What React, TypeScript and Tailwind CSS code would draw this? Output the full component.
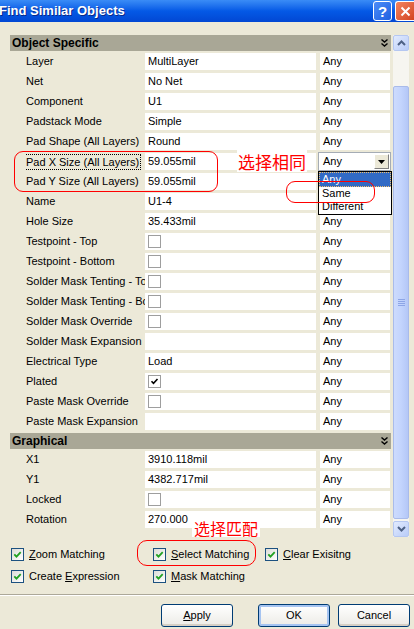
import React from 'react';

type Row = {
  label: string;
  value?: string;
  check?: boolean;
  focus?: boolean;
  covered?: boolean;
};

const objectRows: Row[] = [
  { label: 'Layer', value: 'MultiLayer' },
  { label: 'Net', value: 'No Net' },
  { label: 'Component', value: 'U1' },
  { label: 'Padstack Mode', value: 'Simple' },
  { label: 'Pad Shape (All Layers)', value: 'Round' },
  { label: 'Pad X Size (All Layers)', value: '59.055mil', focus: true, covered: true },
  { label: 'Pad Y Size (All Layers)', value: '59.055mil', covered: true },
  { label: 'Name', value: 'U1-4', covered: true },
  { label: 'Hole Size', value: '35.433mil' },
  { label: 'Testpoint - Top', check: false },
  { label: 'Testpoint - Bottom', check: false },
  { label: 'Solder Mask Tenting - Top', check: false },
  { label: 'Solder Mask Tenting - Bottom', check: false },
  { label: 'Solder Mask Override', check: false },
  { label: 'Solder Mask Expansion', value: '' },
  { label: 'Electrical Type', value: 'Load' },
  { label: 'Plated', check: true },
  { label: 'Paste Mask Override', check: false },
  { label: 'Paste Mask Expansion', value: '' },
];

const graphicalRows: Row[] = [
  { label: 'X1', value: '3910.118mil' },
  { label: 'Y1', value: '4382.717mil' },
  { label: 'Locked', check: false },
  { label: 'Rotation', value: '270.000' },
];

const DoubleChevron = () => (
  <svg width="7" height="8" viewBox="0 0 7 8" className="shrink-0">
    <path d="M0.5 0.5 L3.5 3 L6.5 0.5" fill="none" stroke="#000" strokeWidth="1.4" />
    <path d="M0.5 4.5 L3.5 7 L6.5 4.5" fill="none" stroke="#000" strokeWidth="1.4" />
  </svg>
);

const SectionHeader = ({ title }: { title: string }) => (
  <div className="flex h-[16px] items-center justify-between bg-[#A9A796] pl-[2px] pr-[3px]">
    <span className="text-[12px] font-bold leading-none text-black">{title}</span>
    <DoubleChevron />
  </div>
);

const GridCheck = ({ checked }: { checked: boolean }) => (
  <span className="flex h-[13px] w-[13px] items-center justify-center border border-[#9E9E9E] bg-white">
    {checked && (
      <svg width="9" height="9" viewBox="0 0 9 9">
        <path d="M1.5 4.2 L3.5 6.3 L7.5 2" fill="none" stroke="#000" strokeWidth="1.6" />
      </svg>
    )}
  </span>
);

const PropRow = ({ row }: { row: Row }) => (
  <div className="flex h-[20px] pl-[16px] pt-[2px]">
    <div className="flex h-[17px] w-[119px] items-center overflow-hidden whitespace-nowrap">
      <span
        className={
          row.focus
            ? '-ml-[2px] border border-dotted border-black px-[1px] leading-[14px]'
            : 'leading-[17px]'
        }
      >
        {row.label}
      </span>
    </div>
    <div className="flex h-[17px] w-[171px] items-center bg-white pl-[3px]">
      {row.check !== undefined ? <GridCheck checked={row.check} /> : row.value}
    </div>
    <div className="ml-[4px] flex h-[17px] w-[70px] items-center bg-white pl-[3px]">
      {row.covered ? '' : 'Any'}
    </div>
  </div>
);

const XpCheck = () => (
  <span className="flex h-[13px] w-[13px] shrink-0 items-center justify-center border border-[#1C5180] bg-gradient-to-br from-[#DCDCD7] to-white">
    <svg width="9" height="9" viewBox="0 0 9 9">
      <path d="M1.3 4.3 L3.5 6.6 L7.7 2.2" fill="none" stroke="#21A121" strokeWidth="1.8" />
    </svg>
  </span>
);

const Option = ({ children }: { children: React.ReactNode }) => (
  <label className="flex h-[13px] items-center gap-[5px] leading-[13px]">
    <XpCheck />
    <span className="whitespace-nowrap">{children}</span>
  </label>
);

const ScrollArrow = ({ up }: { up: boolean }) => (
  <div className="flex h-[16px] w-[16px] items-center justify-center rounded-[2px] border border-[#B5C7F1] bg-gradient-to-br from-[#E2EBFE] to-[#B9CCF8]">
    <svg width="9" height="6" viewBox="0 0 9 6">
      <path
        d={up ? 'M1 5 L4.5 1.5 L8 5' : 'M1 1 L4.5 4.5 L8 1'}
        fill="none"
        stroke="#4D6185"
        strokeWidth="2"
      />
    </svg>
  </div>
);

const Scrollbar = () => (
  <div className="flex h-[502px] w-[16px] flex-col bg-[#F6F5F0]">
    <ScrollArrow up />
    <div className="flex flex-1 flex-col pt-[35px] pb-[2px]">
      <div className="flex flex-1 items-center justify-center rounded-[2px] border border-[#A9BBEA] bg-gradient-to-r from-[#CDDBFD] via-[#C3D4FD] to-[#B4C7F7]">
        <div className="flex flex-col gap-[1px]">
          <span className="h-[1px] w-[7px] bg-[#8DA5E6]" />
          <span className="h-[1px] w-[7px] bg-[#8DA5E6]" />
          <span className="h-[1px] w-[7px] bg-[#8DA5E6]" />
          <span className="h-[1px] w-[7px] bg-[#8DA5E6]" />
        </div>
      </div>
    </div>
    <ScrollArrow up={false} />
  </div>
);

const Button = ({ children, focus }: { children: React.ReactNode; focus?: boolean }) => (
  <button
    className={
      'flex h-[23px] w-[72px] items-center justify-center rounded-[3px] border border-[#003C74] bg-gradient-to-b from-white to-[#ECEBE6] text-[11px] text-black ' +
      (focus ? 'shadow-[inset_0_0_0_2px_#A6C4F1]' : 'shadow-[inset_0_-2px_0_#D6D0C5]')
    }
  >
    {children}
  </button>
);

export default function App() {
  return (
    <div
      className="relative h-[629px] w-[414px] overflow-hidden bg-[#ECE9D8] text-[11px] text-black"
      style={{ fontFamily: '"Liberation Sans", Arial, sans-serif' }}
    >
      {/* Title bar */}
      <div className="flex h-[22px] items-center justify-between bg-gradient-to-b from-[#3A8CF6] via-[#0459E6] to-[#0247D3]">
        <span className="-ml-[1px] text-[13px] font-bold text-white [text-shadow:1px_1px_0_#0A2A8A]">
          Find Similar Objects
        </span>
        <div className="flex h-[22px] items-start gap-[3px] pt-[1px]">
          <div className="flex h-[20px] w-[19px] items-center justify-center rounded-[3px] border border-white bg-gradient-to-br from-[#4C8DF8] to-[#1F5FE0] text-[15px] font-bold leading-none text-white">
            ?
          </div>
          <div className="flex h-[20px] w-[19px] items-center justify-center rounded-l-[3px] border border-r-0 border-white bg-gradient-to-br from-[#F2845F] to-[#D3431F]">
            <svg width="11" height="11" viewBox="0 0 11 11">
              <path d="M1.5 1.5 L9.5 9.5 M9.5 1.5 L1.5 9.5" stroke="#fff" strokeWidth="2" />
            </svg>
          </div>
        </div>
      </div>

      {/* Property grid + scrollbar */}
      <div className="mt-[13px] flex pl-[10px]">
        <div className="h-[502px] w-[381px]">
          <SectionHeader title="Object Specific" />
          {objectRows.map((r) => (
            <PropRow key={r.label} row={r} />
          ))}
          <div className="mt-[2px]">
            <SectionHeader title="Graphical" />
            {graphicalRows.map((r) => (
              <PropRow key={r.label} row={r} />
            ))}
          </div>
        </div>
        <div className="ml-[2px]">
          <Scrollbar />
        </div>
      </div>

      {/* Options */}
      <div className="mt-[11px] grid grid-cols-[142px_112px_1fr] gap-y-[9px] pl-[11px]">
        <Option>
          <span className="underline">Z</span>oom Matching
        </Option>
        <Option>
          <span className="underline">S</span>elect Matching
        </Option>
        <Option>
          <span className="underline">C</span>lear Exisitng
        </Option>
        <Option>
          Create <span className="underline">E</span>xpression
        </Option>
        <Option>
          <span className="underline">M</span>ask Matching
        </Option>
      </div>

      <div className="mt-[11px] h-[2px] border-t border-b border-t-[#ACA899] border-b-white" />

      <div className="mt-[8px] flex justify-end gap-[8px] pr-[4px]">
        <div className="mr-[17px]">
          <Button>
            <span className="underline">A</span>pply
          </Button>
        </div>
        <Button focus>OK</Button>
        <Button>Cancel</Button>
      </div>

      {/* Combo box on Pad X row */}
      <div className="absolute left-[318px] top-[152px] flex h-[19px] w-[73px] items-center border border-[#A5ACB5] bg-white pl-[4px]">
        <span className="flex-1">Any</span>
        <div className="mr-[1px] flex h-[15px] w-[15px] items-center justify-center border border-t-white border-l-white border-r-[#808080] border-b-[#808080] bg-[#ECE9D8]">
          <svg width="7" height="4" viewBox="0 0 7 4">
            <path d="M0 0 L7 0 L3.5 4 Z" fill="#000" />
          </svg>
        </div>
      </div>
      <div className="absolute left-[318px] top-[171px] w-[74px] border border-black bg-white pb-[1px] leading-[13px]">
        <div className="border border-dotted border-[#F0C070] bg-[#316AC5] pl-[2px] text-white">Any</div>
        <div className="pl-[3px]">Same</div>
        <div className="pl-[3px]">Different</div>
      </div>

      {/* Red annotations */}
      <div className="pointer-events-none absolute left-[14px] top-[151px] h-[41px] w-[204px] rounded-[9px] border border-[#FF0000]" />
      <div
        className="absolute left-[237px] top-[150px] flex h-[22px] w-[70px] items-center justify-center bg-white text-[17px] leading-none text-[#FF0000]"
        style={{ fontFamily: '"Noto Sans CJK SC", sans-serif' }}
      >
        选择相同
      </div>
      <div className="pointer-events-none absolute left-[286px] top-[181px] h-[22px] w-[89px] rounded-[9px] border border-[#FF0000]" />
      <div
        className="absolute left-[192px] top-[519px] flex h-[18px] w-[68px] items-center justify-center bg-white text-[16px] leading-none text-[#FF0000]"
        style={{ fontFamily: '"Noto Sans CJK SC", sans-serif' }}
      >
        选择匹配
      </div>
      <div className="pointer-events-none absolute left-[137px] top-[540px] h-[26px] w-[119px] rounded-[10px] border border-[#FF0000]" />
    </div>
  );
}
